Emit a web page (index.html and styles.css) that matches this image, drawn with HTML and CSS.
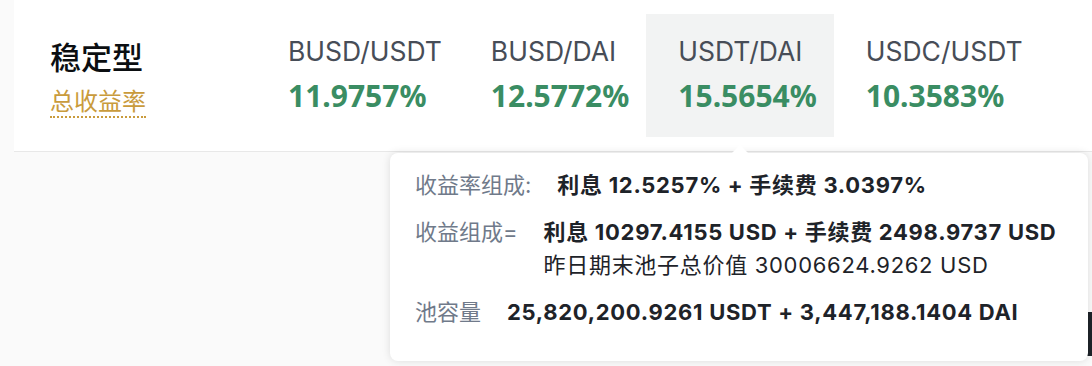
FILE: index.html
```html
<!DOCTYPE html>
<html>

<head>
    <meta charset="utf-8">
    <link rel="stylesheet" href="styles.css">
</head>

<body>
    <div class="page">
        <div class="card">
            <div class="card-title">
                <div class="title">稳定型</div>
                <div class="subtitle"><span class="hint">总收益率</span></div>
            </div>
            <div class="pairs">
                <div class="pair">
                    <div class="pair-name">BUSD/USDT</div>
                    <div class="pair-rate">11.9757%</div>
                </div>
                <div class="pair">
                    <div class="pair-name">BUSD/DAI</div>
                    <div class="pair-rate">12.5772%</div>
                </div>
                <div class="pair active">
                    <div class="pair-name">USDT/DAI</div>
                    <div class="pair-rate">15.5654%</div>
                </div>
                <div class="pair">
                    <div class="pair-name">USDC/USDT</div>
                    <div class="pair-rate">10.3583%</div>
                </div>
            </div>
        </div>

        <div class="below">
            <div class="edge-mark"></div>
        </div>

        <!-- tooltip for the hovered pair -->
        <div class="tooltip">
            <div class="tip-row">
                <div class="tip-label">收益率组成:</div>
                <div class="tip-value">利息 12.5257% + 手续费 3.0397%</div>
            </div>
            <div class="tip-row">
                <div class="tip-label">收益组成=</div>
                <div class="tip-value">
                    利息 10297.4155 USD + 手续费 2498.9737 USD
                    <div class="tip-sub">昨日期末池子总价值 30006624.9262 USD</div>
                </div>
            </div>
            <div class="tip-row">
                <div class="tip-label">池容量</div>
                <div class="tip-value">25,820,200.9261 USDT + 3,447,188.1404 DAI</div>
            </div>
        </div>
    </div>
</body>

</html>
```

FILE: styles.css
```css
body {
    font-family: Inter, "Noto Sans CJK SC", sans-serif;
    background-color: #fafafa;
    margin: 0;
    padding: 0;
}

.page {
    position: relative;
    height: 366px;
    overflow: hidden;
}

.card {
    display: flex;
    margin-left: 14px;
    padding: 14px 0 14px;
    background-color: #fff;
    border-bottom: 1px solid #e8e8e8;
}

.card-title {
    width: 206px;
    padding-left: 36px;
    padding-top: 24px;
}

.title {
    font-size: 31px;
    line-height: 40px;
    font-weight: 500;
    color: #0b0e11;
}

.subtitle {
    margin-top: 10px;
}

.hint {
    display: inline-block;
    font-size: 24px;
    line-height: 28px;
    color: #c99b3c;
    border-bottom: 2px dotted #c99b3c;
}

.pairs {
    display: flex;
}

.pair {
    height: 123px;
    box-sizing: border-box;
    padding: 19px 17px 0 32px;
}

.pair.active {
    background-color: #f2f3f3;
}

.pair-name {
    font-size: 26.5px;
    line-height: 36px;
    color: #474d57;
}

.pair-rate {
    margin-top: 7px;
    font-family: "Noto Sans", sans-serif;
    font-size: 30px;
    line-height: 40px;
    font-weight: 700;
    color: #3a8d63;
}

.below {
    display: flex;
    justify-content: flex-end;
}

.edge-mark {
    width: 5px;
    height: 44px;
    margin-top: 160px;
    background-color: #1e2329;
}

.tooltip {
    position: absolute;
    left: 390px;
    top: 153px;
    width: 698px;
    height: 208px;
    box-sizing: border-box;
    padding: 16px 25px 0;
    background-color: #fff;
    border-radius: 8px;
    box-shadow: 0 0 8px rgba(0, 0, 0, 0.12);
    white-space: nowrap;
}

.tooltip::before {
    content: "";
    position: absolute;
    top: -8px;
    left: 342px;
    border-left: 8px solid transparent;
    border-right: 8px solid transparent;
    border-bottom: 8px solid #fff;
}

.tip-row {
    display: flex;
    gap: 26px;
    font-size: 22px;
    line-height: 33px;
    margin-bottom: 14px;
}

.tip-label {
    color: #707a8a;
}

.tip-value {
    color: #1e2329;
    font-weight: 700;
    letter-spacing: 0.7px;
}

.tip-sub {
    font-weight: 400;
}
```
